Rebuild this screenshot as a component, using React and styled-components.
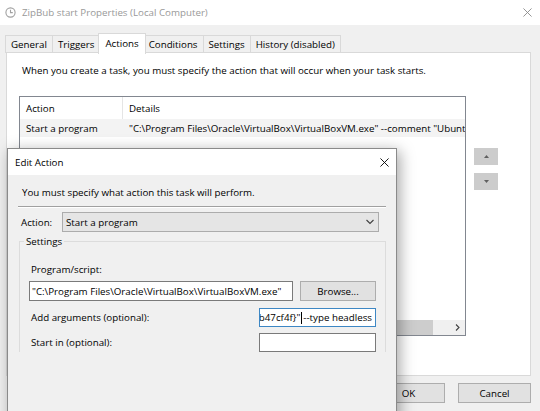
import styled, { createGlobalStyle } from "styled-components";

const GlobalStyle = createGlobalStyle`
html, body { margin: 0; padding: 0; }
body {
  font-family: "Open Sans", "Noto Sans", "DejaVu Sans", sans-serif;
  font-size: 9.75px;
  color: #000;
  background: #f0f0f0;
}
#root { width: 540px; height: 411px; }
`;

const Desktop = styled.div`
position: relative;
width: 540px;
height: 411px;
overflow: hidden;
background: #f0f0f0;
`;

const Window = styled.div`
display: flex;
flex-direction: column;
height: 100%;
`;

const TitleBar = styled.div`
display: flex;
align-items: center;
height: ${props => props.h || "25px"};
flex-shrink: 0;
background: #fff;
color: ${props => props.dim ? "#999" : "#000"};
padding-left: ${props => props.pad || "5px"};
`;

const TitleText = styled.span`
flex: 1;
margin-left: ${props => props.gap || "0px"};
white-space: nowrap;
line-height: 13px;
`;

const CloseBox = styled.div`
width: ${props => props.w || "26px"};
height: 100%;
display: flex;
align-items: center;
justify-content: center;
`;

const Body = styled.div`
display: flex;
flex-direction: column;
padding: 0 9px 0 6px;
`;

const TabStrip = styled.div`
display: flex;
align-items: flex-end;
height: 21px;
margin-top: 7px;
padding-left: 0;
position: relative;
z-index: 1;
`;

const Tab = styled.div`
box-sizing: border-box;
height: ${props => props.selected ? "21px" : "18px"};
display: flex;
align-items: center;
padding: ${props => props.selected ? "0 6px 2px" : "0 5px 0"};
margin: ${props => props.selected ? "0 -2px -1px -2px" : "0 0 0 -1px"};
background: ${props => props.selected ? "#fff" : "#f0f0f0"};
border: 1px solid #d9d9d9;
border-bottom: ${props => props.selected ? "none" : "1px solid #d9d9d9"};
white-space: nowrap;
line-height: 13px;
position: relative;
z-index: ${props => props.selected ? 2 : 1};
`;

const Panel = styled.div`
box-sizing: border-box;
width: 525px;
height: 324px;
margin-top: -1px;
background: #fff;
border: 1px solid #d9d9d9;
display: flex;
flex-direction: column;
`;

const Intro = styled.div`
margin: ${props => props.m || "11px 0 0 15px"};
line-height: 13px;
white-space: nowrap;
`;

const ListArea = styled.div`
display: flex;
gap: 8px;
margin: 19px 0 0 12px;
`;

const ListView = styled.div`
box-sizing: border-box;
width: 447px;
height: 240px;
border: 1px solid #828790;
background: #fff;
display: flex;
flex-direction: column;
overflow: hidden;
`;

const ListRow = styled.div`
display: flex;
align-items: center;
height: ${props => props.h || "18px"};
background: ${props => props.bg || "#fff"};
white-space: nowrap;
flex-shrink: 0;
`;

const Cell = styled.div`
box-sizing: border-box;
width: ${props => props.w || "auto"};
flex-shrink: 0;
height: 100%;
display: flex;
align-items: center;
padding-left: 6px;
border-right: ${props => props.sep ? "1px solid #e5e5e5" : "none"};
line-height: 13px;
`;

const Filler = styled.div`
flex: 1;
`;

const HScroll = styled.div`
display: flex;
align-items: stretch;
height: 15px;
background: #f0f0f0;
flex-shrink: 0;
`;

const ScrollArrow = styled.div`
width: 16px;
display: flex;
align-items: center;
justify-content: center;
`;

const ScrollThumb = styled.div`
width: 397px;
background: #cdcdcd;
`;

const SideButtons = styled.div`
display: flex;
flex-direction: column;
gap: 8px;
padding-top: 52px;
`;

const MoveButton = styled.div`
width: 24px;
height: 17px;
background: #cccccc;
display: flex;
align-items: center;
justify-content: center;
`;

const ButtonRow = styled.div`
display: flex;
justify-content: flex-end;
gap: 13px;
margin-top: 7px;
`;

const PushButton = styled.div`
box-sizing: border-box;
width: ${props => props.w || "73px"};
height: ${props => props.h || "20px"};
flex-shrink: 0;
background: #e1e1e1;
border: 1px solid #adadad;
display: flex;
align-items: center;
justify-content: center;
line-height: 13px;
`;

/* Edit Action dialog floating over the properties window */
const Dialog = styled.div`
position: absolute;
left: 7px;
top: 148px;
width: 390px;
height: 290px;
box-sizing: border-box;
border: 1px solid #8a8a8a;
background: #f0f0f0;
box-shadow: 3px 3px 14px rgba(0, 0, 0, 0.35);
display: flex;
flex-direction: column;
`;

const DialogBody = styled.div`
display: flex;
flex-direction: column;
padding: 0 10px;
`;

const Separator = styled.div`
height: 1px;
margin-top: 7px;
background: #a0a0a0;
border-bottom: 1px solid #fff;
`;

const FieldRow = styled.div`
display: flex;
align-items: center;
margin-top: ${props => props.mt || "0px"};
`;

const Label = styled.div`
width: ${props => props.w || "auto"};
flex: ${props => props.w ? "none" : "1"};
padding-left: ${props => props.pl || "2px"};
margin-top: ${props => props.mt || "0px"};
box-sizing: border-box;
line-height: 13px;
white-space: nowrap;
`;

const Select = styled.div`
box-sizing: border-box;
width: 317px;
height: 20px;
background: #e5e5e5;
border: 1px solid #acacac;
display: flex;
align-items: center;
justify-content: space-between;
padding: 0 4px 0 3px;
line-height: 13px;
`;

const GroupBox = styled.fieldset`
margin: 3px 0 0 1px;
padding: 0 9px 0 4px;
border: 1px solid #dcdcdc;
border-bottom: none;
min-width: 0;
`;

const Legend = styled.legend`
padding: 0 2px;
line-height: 13px;
`;

const GroupContent = styled.div`
display: flex;
flex-direction: column;
padding-left: 5px;
`;

const TextBox = styled.div`
box-sizing: border-box;
width: ${props => props.w || "117px"};
height: ${props => props.h || "19px"};
flex-shrink: 0;
background: #fff;
border: 1px solid ${props => props.focus ? "#3d87c4" : "#7a7a7a"};
display: flex;
align-items: center;
justify-content: ${props => props.end ? "flex-end" : "flex-start"};
padding: 0 3px 0 2px;
overflow: hidden;
white-space: nowrap;
line-height: 13px;
`;

const Caret = styled.span`
display: inline-block;
flex-shrink: 0;
width: 1px;
height: 12px;
background: #000;
margin: 0 1px 0 1px;
`;

const ClockIcon = () => (
  <svg width="11" height="11" viewBox="0 0 11 11">
    <circle cx="5.5" cy="5.5" r="4.6" fill="none" stroke="#a0a0a0" strokeWidth="1.1" />
    <path d="M5.5 2.8 V5.6 H7.8" fill="none" stroke="#a0a0a0" strokeWidth="1.1" />
  </svg>
);

const CloseX = ({ color = "#000", size = 9 }) => (
  <svg width={size} height={size} viewBox="0 0 10 10">
    <path d="M0.5 0.5 L9.5 9.5 M9.5 0.5 L0.5 9.5" stroke={color} strokeWidth="1" />
  </svg>
);

const Chevron = ({ dir = "down" }) => {
  const d = {
    down: "M0.5 1 L4 4.5 L7.5 1",
    right: "M1 0.5 L4 3.5 L1 6.5",
  }[dir];
  const box = dir === "down" ? [8, 6] : [5, 7];
  return (
    <svg width={box[0]} height={box[1]} viewBox={`0 0 ${box[0]} ${box[1]}`}>
      <path d={d} fill="none" stroke="#404040" strokeWidth="1.1" />
    </svg>
  );
};

const Tri = ({ up }) => (
  <svg width="5" height="3" viewBox="0 0 5 3">
    <path d={up ? "M0 3 L2.5 0 L5 3 Z" : "M0 0 L2.5 3 L5 0 Z"} fill="#606060" />
  </svg>
);

const tabs = ["General", "Triggers", "Actions", "Conditions", "Settings", "History (disabled)"];

export default function App() {
  return (
    <Desktop>
      <GlobalStyle />
      <Window>
        <TitleBar dim>
          <ClockIcon />
          <TitleText gap="6px">ZipBub start Properties (Local Computer)</TitleText>
          <CloseBox w="26px"><CloseX color="#8a8a8a" size={9} /></CloseBox>
        </TitleBar>
        <Body>
          <TabStrip>
            {tabs.map(t => (
              <Tab key={t} selected={t === "Actions"}>{t}</Tab>
            ))}
          </TabStrip>
          <Panel>
            <Intro>When you create a task, you must specify the action that will occur when your task starts.</Intro>
            <ListArea>
              <ListView>
                <ListRow h="22px">
                  <Cell w="103px" sep>Action</Cell>
                  <Cell>Details</Cell>
                </ListRow>
                <ListRow bg="#f3f3f3">
                  <Cell w="103px">Start a program</Cell>
                  <Cell>"C:\Program Files\Oracle\VirtualBox\VirtualBoxVM.exe" --comment "Ubuntu" --startvm "{"{"}8e3b1c2d-5f4a-4b6e-9d3a-e5d9e6b47cf4f{"}"}" --type headless</Cell>
                </ListRow>
                <Filler />
                <HScroll>
                  <ScrollArrow />
                  <ScrollThumb />
                  <Filler />
                  <ScrollArrow><Chevron dir="right" /></ScrollArrow>
                </HScroll>
              </ListView>
              <SideButtons>
                <MoveButton><Tri up /></MoveButton>
                <MoveButton><Tri /></MoveButton>
              </SideButtons>
            </ListArea>
          </Panel>
          <ButtonRow>
            <PushButton>OK</PushButton>
            <PushButton>Cancel</PushButton>
          </ButtonRow>
        </Body>
      </Window>

      <Dialog>
        <TitleBar h="26px" pad="7px">
          <TitleText>Edit Action</TitleText>
          <CloseBox w="24px"><CloseX size={9} /></CloseBox>
        </TitleBar>
        <DialogBody>
          <Intro m="11px 0 0 4px">You must specify what action this task will perform.</Intro>
          <Separator />
          <FieldRow mt="4px">
            <Label w="44px" pl="3px">Action:</Label>
            <Select>
              <span>Start a program</span>
              <Chevron />
            </Select>
          </FieldRow>
          <GroupBox>
            <Legend>Settings</Legend>
            <GroupContent>
              <Label mt="15px">Program/script:</Label>
              <FieldRow mt="5px">
                <TextBox w="264px" h="20px">"C:\Program Files\Oracle\VirtualBox\VirtualBoxVM.exe"</TextBox>
                <Filler />
                <PushButton w="76px">Browse...</PushButton>
              </FieldRow>
              <FieldRow mt="7px">
                <Label>Add arguments (optional):</Label>
                <TextBox focus end>
                  <span>-5d9e6b47cf4f{"}"}"</span><Caret /><span>--type headless</span>
                </TextBox>
              </FieldRow>
              <FieldRow mt="6px">
                <Label>Start in (optional):</Label>
                <TextBox />
              </FieldRow>
            </GroupContent>
          </GroupBox>
        </DialogBody>
      </Dialog>
    </Desktop>
  );
}
